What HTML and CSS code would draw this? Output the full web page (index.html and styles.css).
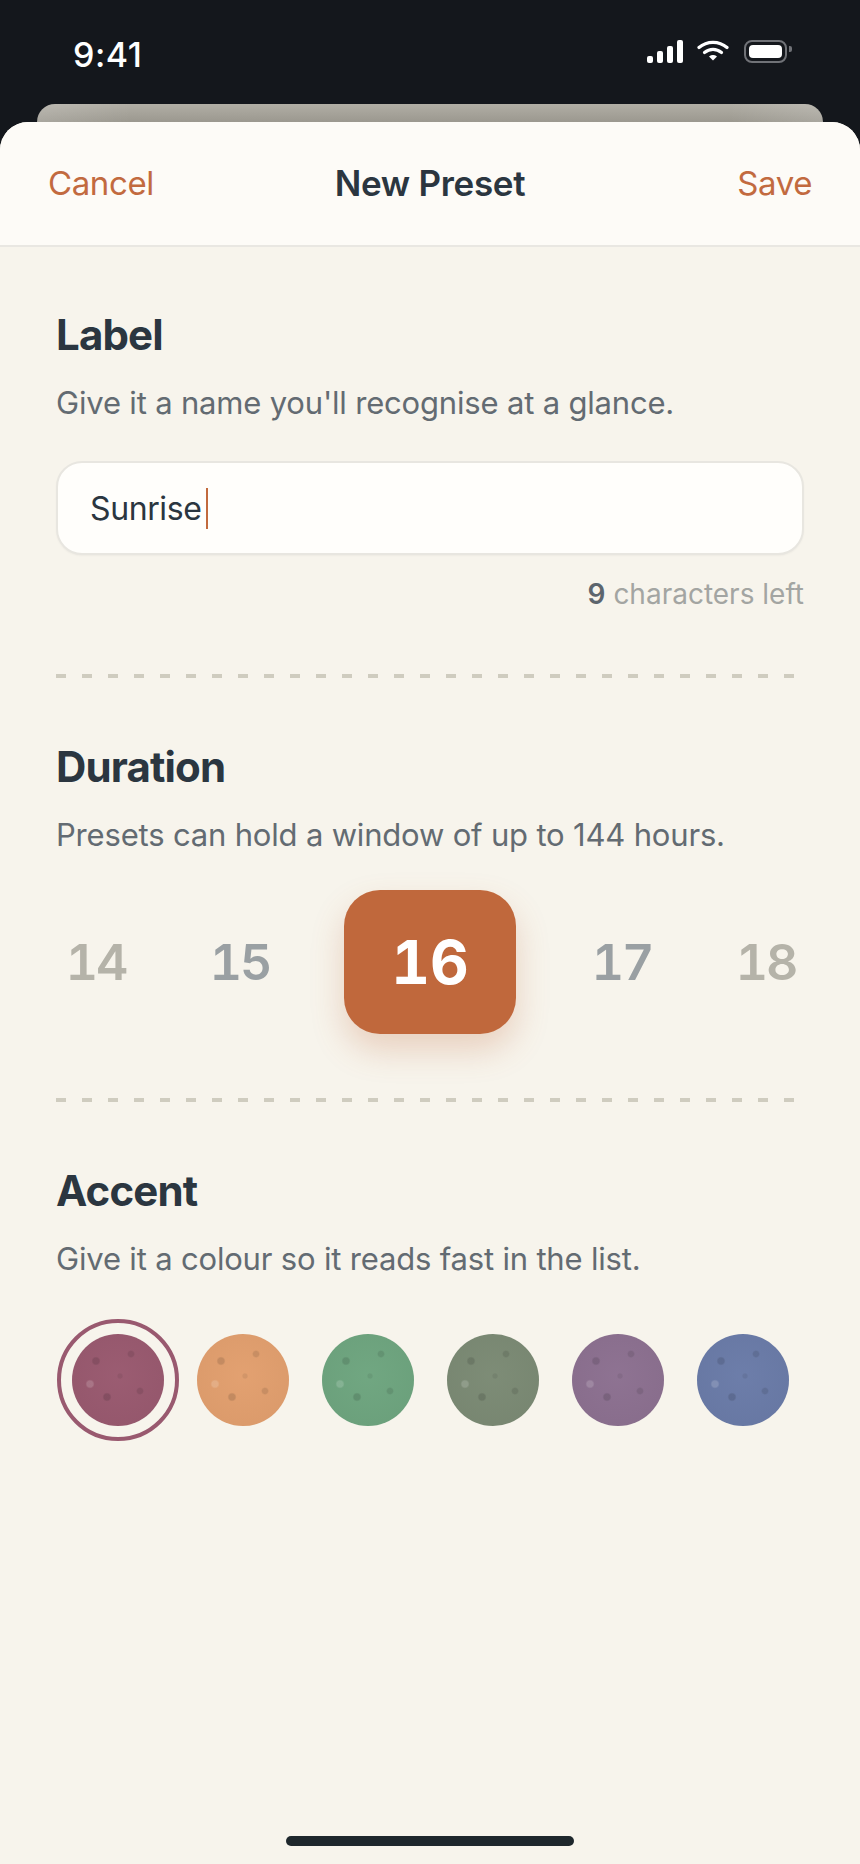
FILE: index.html
```html
<!DOCTYPE html>
<html lang="en">
<head>
    <meta charset="UTF-8">
    <meta name="viewport" content="width=device-width, initial-scale=1.0">
    <title>New Preset</title>
    <link rel="stylesheet" href="styles.css">
</head>
<body>
    <div class="status-bar">
        <span class="status-time">9:41</span>
        <div class="status-icons">
            <div class="signal">
                <span class="signal-bar bar-1"></span>
                <span class="signal-bar bar-2"></span>
                <span class="signal-bar bar-3"></span>
                <span class="signal-bar bar-4"></span>
            </div>
            <svg class="wifi" viewBox="0 0 32 21" width="32" height="21" aria-hidden="true">
                <path d="M2 7.5C10 .6 22 .6 30 7.5" fill="none" stroke="#fff" stroke-width="3.2" stroke-linecap="round"/>
                <path d="M7.5 12.6C12.6 8.4 19.4 8.4 24.5 12.6" fill="none" stroke="#fff" stroke-width="3.2" stroke-linecap="round"/>
                <path d="M12 16.4C14.6 14.6 17.4 14.6 20 16.4L16 20.6Z" fill="#fff"/>
            </svg>
            <div class="battery">
                <span class="battery-level"></span>
            </div>
        </div>
    </div>

    <div class="back-card"></div>

    <main class="sheet">
        <header class="sheet-header">
            <button class="link-button cancel">Cancel</button>
            <h1 class="sheet-title">New Preset</h1>
            <button class="link-button save">Save</button>
        </header>

        <section class="section">
            <h2 class="section-title">Label</h2>
            <p class="section-hint">Give it a name you'll recognise at a glance.</p>
            <div class="text-field">
                <span>Sunrise</span><span class="caret"></span>
            </div>
            <p class="char-count"><b>9</b> characters left</p>
        </section>

        <div class="divider"></div>

        <section class="section">
            <h2 class="section-title">Duration</h2>
            <p class="section-hint">Presets can hold a window of up to 144 hours.</p>
            <div class="picker">
                <span class="picker-item far">14</span>
                <span class="picker-item near">15</span>
                <span class="picker-item current">16</span>
                <span class="picker-item near">17</span>
                <span class="picker-item far">18</span>
            </div>
        </section>

        <div class="divider"></div>

        <section class="section">
            <h2 class="section-title">Accent</h2>
            <p class="section-hint">Give it a colour so it reads fast in the list.</p>
            <div class="swatches">
                <span class="swatch rose selected"></span>
                <span class="swatch apricot"></span>
                <span class="swatch green"></span>
                <span class="swatch sage"></span>
                <span class="swatch plum"></span>
                <span class="swatch blue"></span>
            </div>
        </section>

        <div class="home-indicator"></div>
    </main>
</body>
</html>
```

FILE: styles.css
```css
* {
    box-sizing: border-box;
}

body {
    font-family: Inter, "Liberation Sans", sans-serif;
    margin: 0;
    width: 860px;
    height: 1864px;
    display: flex;
    flex-direction: column;
    overflow: hidden;
    background-color: #14171c;
}

.status-bar {
    height: 104px;
    flex: none;
    display: flex;
    justify-content: space-between;
    padding: 33px 73px 0 73px;
}

.status-time {
    color: #fff;
    font-size: 34px;
    font-weight: 500;
    line-height: 44px;
    letter-spacing: 0.5px;
}

.status-icons {
    display: flex;
    align-items: flex-start;
    gap: 15px;
    padding-top: 7px;
}

.signal {
    display: flex;
    align-items: flex-end;
    gap: 4px;
    height: 23px;
    margin-right: -1px;
}

.signal-bar {
    width: 6px;
    background-color: #fff;
    border-radius: 2px;
}

.bar-1 { height: 7px; }
.bar-2 { height: 12px; }
.bar-3 { height: 17px; }
.bar-4 { height: 23px; }

.battery {
    position: relative;
    width: 43px;
    height: 23px;
    padding: 3px;
    border: 2.5px solid #707277;
    border-radius: 8px;
}

.battery::after {
    content: "";
    position: absolute;
    top: 4px;
    right: -7px;
    width: 3px;
    height: 6px;
    border-radius: 0 2px 2px 0;
    background-color: #707277;
}

.battery-level {
    display: block;
    height: 100%;
    background-color: #fff;
    border-radius: 4px;
}

.back-card {
    height: 18px;
    flex: none;
    margin: 0 37px;
    border-radius: 24px 24px 0 0;
    background:
        linear-gradient(90deg, rgba(255, 255, 255, 0.14), transparent 12%, transparent 88%, rgba(255, 255, 255, 0.14)),
        linear-gradient(#b1aea5, #9b988f);
}

.sheet {
    flex: 1;
    display: flex;
    flex-direction: column;
    background-color: #f7f4ec;
    border-radius: 28px 28px 0 0;
    overflow: hidden;
}

.sheet-header {
    height: 125px;
    flex: none;
    display: grid;
    grid-template-columns: 1fr auto 1fr;
    align-items: center;
    padding: 0 48px 2px 48px;
    background-color: #fdfbf7;
    border-bottom: 2px solid #e9e7e2;
}

.sheet-title {
    margin: 0;
    color: #2b3640;
    font-size: 35px;
    font-weight: 600;
    letter-spacing: -0.3px;
}

.link-button {
    padding: 0;
    border: none;
    background: none;
    color: #c26a3f;
    font-family: inherit;
    font-size: 33px;
    letter-spacing: -0.4px;
    text-align: left;
}

.link-button.save {
    text-align: right;
}

.section {
    padding: 64px 56px 0 56px;
}

.divider + .section {
    padding-top: 65px;
}

.section-title {
    margin: 0;
    color: #2b3640;
    font-size: 42px;
    font-weight: 700;
    line-height: 48px;
    letter-spacing: -0.02em;
}

.section-hint {
    margin: 24px 0 0 0;
    color: #636b72;
    font-size: 31px;
    line-height: 40px;
    letter-spacing: -0.18px;
}

.text-field {
    display: flex;
    align-items: center;
    height: 94px;
    margin-top: 38px;
    padding: 0 32px;
    background-color: #fffefb;
    border: 2px solid #e8e6e0;
    border-radius: 26px;
    box-shadow: 0 1px 2px rgba(0, 0, 0, 0.04);
    color: #2b3640;
    font-size: 32px;
    letter-spacing: -0.4px;
}

.caret {
    width: 2px;
    height: 41px;
    margin-left: 5px;
    background-color: #c26a3d;
}

.char-count {
    margin: 22px 0 -1px 0;
    color: #a3a5a2;
    font-size: 28px;
    line-height: 34px;
    text-align: right;
}

.char-count b {
    color: #5c656d;
    font-weight: 600;
}

.divider {
    height: 4px;
    width: 739px;
    flex: none;
    margin: 64px 0 0 56px;
    background-image: repeating-linear-gradient(90deg, #cfccbf 0 10px, transparent 10px 26px);
}

.picker {
    display: flex;
    align-items: center;
    gap: 64px;
    margin-top: 35px;
    font-variant-numeric: tabular-nums;
}

.picker-item {
    flex: none;
    width: 80px;
    text-align: center;
    font-size: 50px;
    font-weight: 600;
    letter-spacing: -2px;
}

.picker-item.far {
    color: #b5b3a9;
}

.picker-item.near {
    color: #9aa0a3;
}

.picker-item.current {
    display: flex;
    align-items: center;
    justify-content: center;
    width: 172px;
    height: 144px;
    margin-right: 2px;
    background-color: #c0683c;
    border-radius: 36px;
    box-shadow: 0 16px 32px rgba(192, 104, 60, 0.25);
    color: #fff;
    font-size: 60px;
    font-weight: 700;
    letter-spacing: 0;
}

.swatches {
    display: flex;
    gap: 33px;
    margin-top: 55px;
    padding-left: 16px;
}

.swatch {
    width: 92px;
    height: 92px;
    border-radius: 50%;
    background-image:
        radial-gradient(circle 4.6px at 24px 27px, rgba(0, 0, 0, 0.12) 65%, transparent),
        radial-gradient(circle 4px at 59px 20px, rgba(0, 0, 0, 0.1) 65%, transparent),
        radial-gradient(circle 3.2px at 48px 42px, rgba(0, 0, 0, 0.07) 65%, transparent),
        radial-gradient(circle 4.6px at 18px 50px, rgba(255, 255, 255, 0.16) 65%, transparent),
        radial-gradient(circle 4px at 68px 57px, rgba(0, 0, 0, 0.1) 65%, transparent),
        radial-gradient(circle 4.6px at 35px 63px, rgba(0, 0, 0, 0.13) 65%, transparent),
        radial-gradient(circle at 50% 45%, rgba(255, 255, 255, 0.02), rgba(0, 0, 0, 0.04));
}

.swatch.selected {
    outline: 4px solid #99596f;
    outline-offset: 11px;
}

.rose { background-color: #99596f; }
.apricot { background-color: #e29f6e; }
.green { background-color: #6ea57f; }
.sage { background-color: #7b8a74; }
.plum { background-color: #8c7090; }
.blue { background-color: #6a7ba8; }

.home-indicator {
    width: 288px;
    height: 10px;
    flex: none;
    margin: auto auto 18px auto;
    background-color: #1e272c;
    border-radius: 5px;
}
```
